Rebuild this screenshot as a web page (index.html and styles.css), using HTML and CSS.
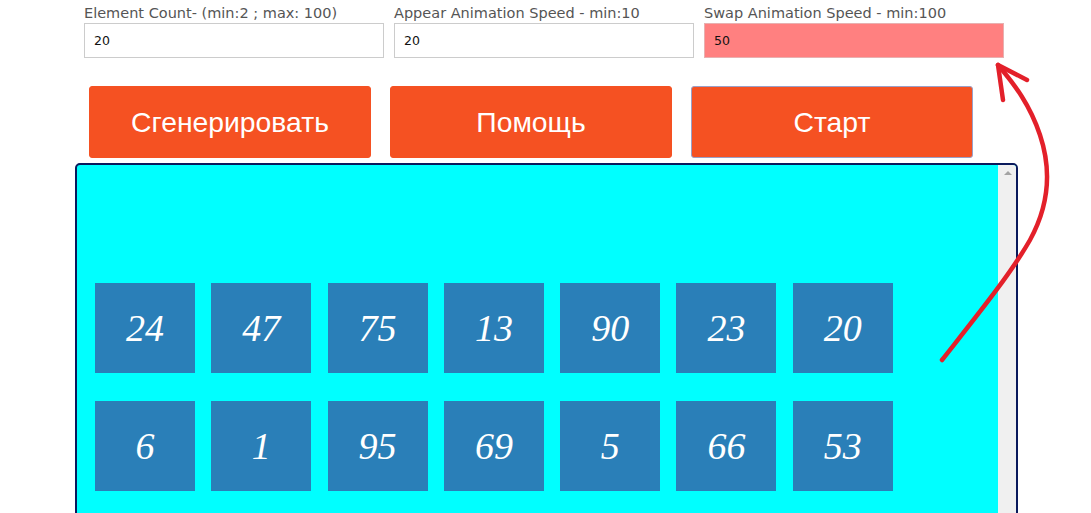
FILE: index.html
```html
<!DOCTYPE html>
<html>
<head>
<meta charset="utf-8">
<link rel="stylesheet" href="styles.css">
</head>
<body>
<div class="page">
  <div class="fields">
    <div class="field">
      <label class="lbl">Element Count- (min:2 ; max: 100)</label>
      <input class="inp" value="20">
    </div>
    <div class="field">
      <label class="lbl">Appear Animation Speed - min:10</label>
      <input class="inp" value="20">
    </div>
    <div class="field">
      <label class="lbl">Swap Animation Speed - min:100</label>
      <input class="inp invalid" value="50">
    </div>
  </div>
  <div class="buttons">
    <button class="btn">Сгенерировать</button>
    <button class="btn">Помощь</button>
    <button class="btn focused">Старт</button>
  </div>
  <div class="board">
    <div class="area">
      <div class="row">
        <div class="tile">24</div><div class="tile">47</div><div class="tile">75</div><div class="tile">13</div><div class="tile">90</div><div class="tile">23</div><div class="tile">20</div>
      </div>
      <div class="row">
        <div class="tile">6</div><div class="tile">1</div><div class="tile">95</div><div class="tile">69</div><div class="tile">5</div><div class="tile">66</div><div class="tile">53</div>
      </div>
    </div>
    <div class="scrollbar"><div class="up"></div></div>
  </div>
</div>
<svg class="arrow" width="1091" height="513" viewBox="0 0 1091 513">
  <path d="M942 360 C 975 318, 1010 275, 1030 240 C 1052 200, 1050 165, 1040 135 C 1030 105, 1015 85, 998 65" fill="none" stroke="#e3202a" stroke-width="4.5" stroke-linecap="round"/>
  <path d="M1027 80 L 998 65 L 1003 100" fill="none" stroke="#e3202a" stroke-width="4.5" stroke-linecap="round" stroke-linejoin="round"/>
</svg>
</body>
</html>
```
FILE: styles.css
```css
html, body {
  margin: 0;
  padding: 0;
  background: #ffffff;
  overflow: hidden;
}
.page {
  width: 1091px;
  height: 513px;
  overflow: hidden;
}
.fields {
  display: flex;
  gap: 10px;
  padding: 4px 0 0 84px;
}
.field {
  display: flex;
  flex-direction: column;
  width: 300px;
}
.lbl {
  font-family: "DejaVu Sans", Verdana, sans-serif;
  font-size: 14.5px;
  line-height: 19px;
  color: #555555;
  white-space: nowrap;
}
.inp {
  box-sizing: border-box;
  width: 300px;
  height: 35px;
  margin: 0;
  border: 1px solid #cccccc;
  padding: 0 9px;
  font-family: "DejaVu Sans", Verdana, sans-serif;
  font-size: 12.5px;
  color: #111111;
  background: #ffffff;
  outline: none;
}
.inp.invalid {
  background: #ff8080;
  border-color: #e8b0b0;
}
.buttons {
  display: flex;
  gap: 19px;
  padding: 28px 0 0 89px;
}
.btn {
  width: 282px;
  height: 72px;
  margin: 0;
  border: 1px solid #f55122;
  border-radius: 3px;
  background: #f55122;
  color: #ffffff;
  font-family: "Liberation Sans", Arial, sans-serif;
  font-size: 28.3px;
  padding: 0;
}
.btn.focused {
  border-color: #9aa0c8;
}
.board {
  box-sizing: border-box;
  margin: 5px 0 0 75px;
  width: 943px;
  height: 400px;
  border: 2px solid #0a1a5c;
  border-radius: 5px;
  background: #00ffff;
  display: flex;
}
.area {
  flex: 1;
  display: flex;
  flex-direction: column;
  gap: 28px;
  padding: 118px 0 0 18px;
}
.row {
  display: flex;
  gap: 16.3px;
}
.tile {
  width: 100px;
  height: 90px;
  background: #2a7fb8;
  color: #ffffff;
  font-family: "Liberation Serif", "Times New Roman", serif;
  font-style: italic;
  font-size: 38px;
  display: flex;
  align-items: center;
  justify-content: center;
}
.scrollbar {
  width: 17px;
  background: #f0f0f0;
  border-left: 1px solid #e6f6f6;
  position: relative;
  border-radius: 0 3px 0 0;
}
.up {
  position: absolute;
  top: 6px;
  left: 5px;
  width: 0;
  height: 0;
  border-left: 4px solid transparent;
  border-right: 4px solid transparent;
  border-bottom: 4px solid #a3a3a3;
}
.arrow {
  position: absolute;
  left: 0;
  top: 0;
  pointer-events: none;
}
```
